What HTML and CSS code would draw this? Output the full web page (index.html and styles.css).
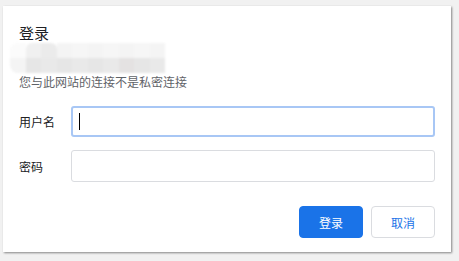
FILE: index.html
```html
<!DOCTYPE html>
<html lang="zh-CN">
<head>
<meta charset="utf-8">
<title>登录</title>
<link rel="stylesheet" href="styles.css">
</head>
<body>
<div class="dialog">
  <div class="title">登录</div>
  <div class="blurred" aria-hidden="true">
    <div class="row top">
      <span class="c0"></span><span class="c1"></span><span class="c2"></span><span class="c4"></span><span class="c3"></span><span class="c4"></span><span class="c3"></span><span class="c4"></span><span class="c3"></span><span class="c4"></span>
    </div>
    <div class="row bottom">
      <span class="d0"></span><span class="d1"></span><span class="d2"></span><span class="d1"></span><span class="d2"></span><span class="d1"></span><span class="d2"></span><span class="d3"></span><span class="d1"></span><span class="d2"></span>
    </div>
  </div>
  <div class="subtitle">您与此网站的连接不是私密连接</div>
  <div class="fields">
    <div class="field">
      <label class="label">用户名</label>
      <div class="input focused"><span class="caret"></span></div>
    </div>
    <div class="field">
      <label class="label">密码</label>
      <div class="input"></div>
    </div>
  </div>
  <div class="actions">
    <button class="btn primary">登录</button>
    <button class="btn secondary">取消</button>
  </div>
</div>
</body>
</html>
```
FILE: styles.css
```css
html, body {
  margin: 0;
  padding: 0;
}
body {
  background: #f1f1f1;
  width: 459px;
  height: 261px;
  overflow: hidden;
  font-family: "Noto Sans CJK SC", "Noto Sans", sans-serif;
  color: #202124;
}
.dialog {
  margin: 6px 0 0 3px;
  width: 448px;
  height: 246px;
  box-sizing: border-box;
  background: #fff;
  box-shadow: 1px 1px 2px rgba(0,0,0,0.45);
  padding: 16px 16px 14px 16px;
  display: flex;
  flex-direction: column;
}
.title {
  font-size: 15px;
  line-height: 21px;
  color: #202124;
}
.blurred {
  margin-left: -9px;
  width: 155px;
  height: 30px;
  display: flex;
  flex-direction: column;
  filter: blur(1px);
}
.blurred .row {
  display: flex;
  height: 15px;
}
.blurred span {
  width: 15.5px;
  flex: none;
}
.c0 { background: #fbfbfb; border-radius: 8px 0 0 0; }
.c1 { background: #f0f0f0; border-radius: 6px 0 0 0; }
.c2 { background: #ebebeb; border-radius: 0 6px 0 0; }
.c3 { background: #f6f6f6; }
.c4 { background: #f4f4f4; }
.d0 { background: #f4f4f4; border-radius: 0 0 0 8px; }
.d1 { background: #e6e6e6; }
.d2 { background: #e9e9e9; }
.d3 { background: #e4e2e2; }
.subtitle {
  font-size: 12px;
  line-height: 16px;
  color: #5f6368;
  margin-top: 1px;
}
.fields {
  margin-top: 16px;
  display: flex;
  flex-direction: column;
  gap: 13px;
}
.field {
  display: flex;
  align-items: center;
}
.label {
  width: 52px;
  font-size: 12px;
  color: #202124;
}
.input {
  flex: 1;
  height: 32px;
  box-sizing: border-box;
  border: 1px solid #dadce0;
  border-radius: 3px;
  display: flex;
  align-items: center;
  padding-left: 7px;
}
.input.focused {
  border: 2px solid #a8c7f5;
  height: 31px;
  padding-left: 6px;
}
.caret {
  width: 1px;
  height: 17px;
  background: #000;
}
.actions {
  margin-top: auto;
  display: flex;
  justify-content: flex-end;
  gap: 8px;
}
.btn {
  width: 64px;
  height: 32px;
  border-radius: 4px;
  font-family: "Noto Sans CJK SC", "Noto Sans", sans-serif;
  font-size: 12px;
  padding: 0;
  cursor: pointer;
}
.primary {
  background: #1a73e8;
  border: 1px solid #1a73e8;
  color: #fff;
}
.secondary {
  background: #fff;
  border: 1px solid #dadce0;
  color: #1a73e8;
}
```
